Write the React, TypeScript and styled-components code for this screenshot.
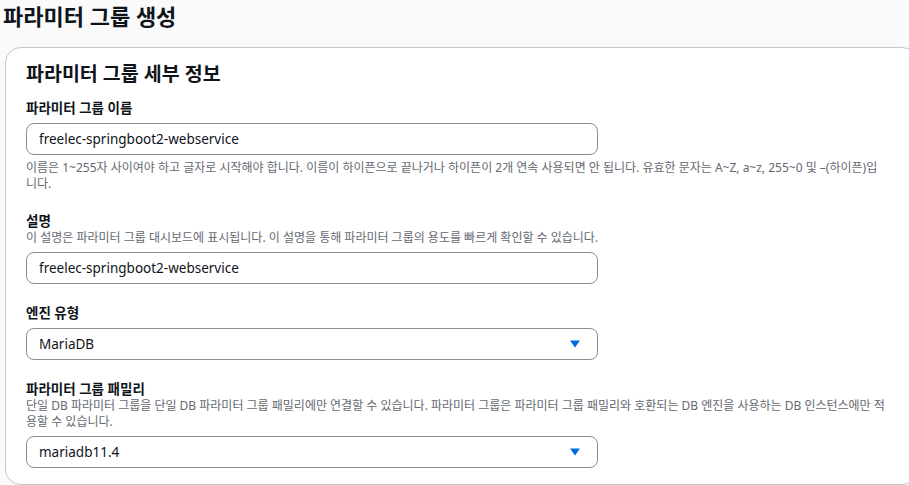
import React from "react"
import styled, { createGlobalStyle } from 'styled-components'

const GlobalStyle = createGlobalStyle`
  html, body {
    margin: 0;
    padding: 0;
    background: #fafafa;
    overflow: hidden;
  }
  body {
    font-family: "Noto Sans", "Noto Sans CJK KR", sans-serif;
    color: #0f141a;
  }
`

const Caret: React.FC = () => (
    <svg width="12" height="10" viewBox="0 0 12 10">
        <path d="M1 1.5h10L6 8.5z" fill="#006ce0" />
    </svg>
)

const Field: React.FC<{
    label: string
    desc?: string
    hint?: string
    children: React.ReactNode
}> = ({ label, desc, hint, children }) => (
    <FieldWrapper>
        <Label>{label}</Label>
        {desc && <Desc>{desc}</Desc>}
        <Control>{children}</Control>
        {hint && <Hint>{hint}</Hint>}
    </FieldWrapper>
)

const App: React.FC = () => (
    <>
        <GlobalStyle />
        <Page>
            <Title>파라미터 그룹 생성</Title>
            <Card>
                <CardTitle>파라미터 그룹 세부 정보</CardTitle>
                <Form>
                    <Field
                        label="파라미터 그룹 이름"
                        hint="이름은 1~255자 사이여야 하고 글자로 시작해야 합니다. 이름이 하이픈으로 끝나거나 하이픈이 2개 연속 사용되면 안 됩니다. 유효한 문자는 A~Z, a~z, 255~0 및 –(하이픈)입니다."
                    >
                        <Input>freelec-springboot2-webservice</Input>
                    </Field>
                    <Field
                        label="설명"
                        desc="이 설명은 파라미터 그룹 대시보드에 표시됩니다. 이 설명을 통해 파라미터 그룹의 용도를 빠르게 확인할 수 있습니다."
                    >
                        <Input>freelec-springboot2-webservice</Input>
                    </Field>
                    <Field label="엔진 유형">
                        <Select>
                            <span>MariaDB</span>
                            <Caret />
                        </Select>
                    </Field>
                    <Field
                        label="파라미터 그룹 패밀리"
                        desc="단일 DB 파라미터 그룹을 단일 DB 파라미터 그룹 패밀리에만 연결할 수 있습니다. 파라미터 그룹은 파라미터 그룹 패밀리와 호환되는 DB 엔진을 사용하는 DB 인스턴스에만 적용할 수 있습니다."
                    >
                        <Select>
                            <span>mariadb11.4</span>
                            <Caret />
                        </Select>
                    </Field>
                </Form>
            </Card>
        </Page>
    </>
)

const Page = styled.div`
    width: 909px;
    height: 485px;
    overflow: hidden;
    display: flex;
    flex-direction: column;
`

const Title = styled.h1`
    margin: 0;
    padding: 1px 0 0 3px;
    height: 47px;
    box-sizing: border-box;
    font-size: 22px;
    line-height: 30px;
    font-weight: 700;
    color: #0f141a;
`

const Card = styled.div`
    margin-left: 5px;
    width: 913px;
    flex: 1;
    background: #fff;
    border: 1px solid #c6c6cd;
    border-radius: 16px;
    padding: 12px 20px 0;
    box-sizing: border-box;
`

const CardTitle = styled.h2`
    margin: 0 0 11px;
    font-size: 19.5px;
    line-height: 28px;
    font-weight: 700;
`

const Form = styled.div`
    display: flex;
    flex-direction: column;
    gap: 20px;
`

const FieldWrapper = styled.div`
    display: flex;
    flex-direction: column;
    width: 868px;
`

const Label = styled.div`
    font-size: 13.5px;
    line-height: 18px;
    font-weight: 700;
`

const Desc = styled.div`
    font-size: 12px;
    line-height: 16px;
    color: #656871;
`

const Hint = styled(Desc)`
    margin-top: 5px;
    max-width: 858px;
`

const Control = styled.div`
    margin-top: 6px;
    width: 572px;
`

const Input = styled.div`
    height: 32px;
    box-sizing: border-box;
    border: 1px solid #8c8c94;
    border-radius: 8px;
    padding: 0 12px;
    display: flex;
    align-items: center;
    font-size: 13.5px;
    background: #fff;
`

const Select = styled(Input)`
    justify-content: space-between;
    padding-right: 16px;
`

export default App
